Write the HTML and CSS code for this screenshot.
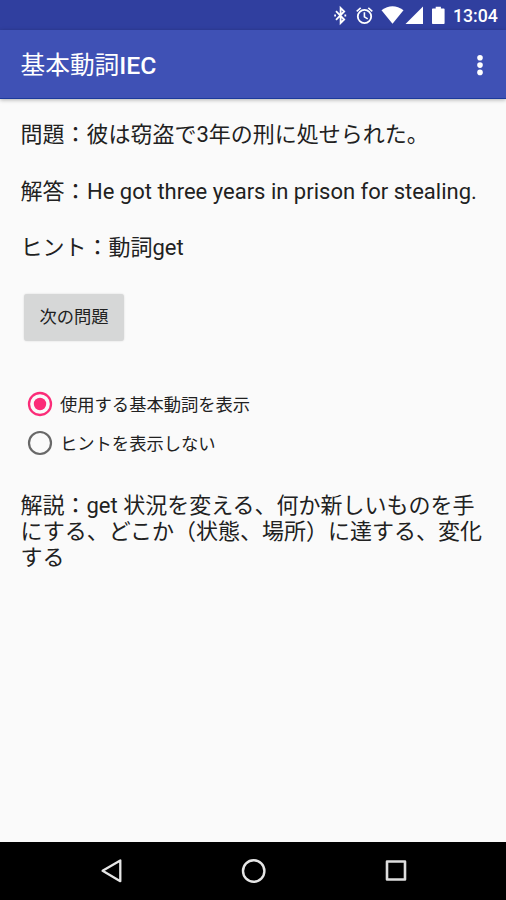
FILE: index.html
```
<!DOCTYPE html>
<html lang="ja">
<head>
<meta charset="utf-8">
<title>基本動詞IEC</title>
<link rel="stylesheet" href="styles.css">
</head>
<body>
<div class="screen">
  <div class="status">
    <svg width="114" height="30" viewBox="0 0 114 30" fill="#fff">
      <path d="M3 11.2L11.2 19.5L7.6 23V8L11.2 11.5L3 19.8" fill="none" stroke="#fff" stroke-width="1.8"/>
      <path d="M1.2 15.5h1.8M11.4 15.5h1.8" stroke="#fff" stroke-width="1.8"/>
      <circle cx="31.5" cy="16.5" r="6.7" fill="none" stroke="#fff" stroke-width="1.8"/>
      <path d="M23.7 11.3l4-3.4M39.3 11.3l-4-3.4M31.4 12.3v4.6l3.3 2" fill="none" stroke="#fff" stroke-width="1.6"/>
      <path d="M48.5 10.2Q59.5 2.4 70.5 10.2L59.5 23.8z"/>
      <path d="M90 6.6V24H72.5z"/>
      <path d="M99.8 8.4h2.9V6.8h5.2v1.6h2.9q.8 0 .8.8V23.2q0 .8-.8.8h-11q-.8 0-.8-.8V9.2q0-.8.8-.8z"/>
    </svg>
    <span class="clock">13:04</span>
  </div>
  <header class="appbar">
    <h1>基本動詞<b>IEC</b></h1>
    <svg width="8" height="24" viewBox="0 0 8 24" fill="#fff"><circle cx="4" cy="4.7" r="2.8"/><circle cx="4" cy="12.1" r="2.8"/><circle cx="4" cy="19.4" r="2.8"/></svg>
  </header>
  <main>
    <p class="row">問題：彼は窃盗で3年の刑に処せられた。</p>
    <p class="row">解答：<span class="answer">He got three years in prison for stealing.</span></p>
    <p class="row">ヒント：動詞get</p>
    <button class="next">次の問題</button>
    <div class="options">
      <div class="option"><svg width="26" height="26" viewBox="0 0 26 26"><circle cx="13" cy="13" r="11" fill="none" stroke="#fb2c78" stroke-width="2.3"/><circle cx="13" cy="13" r="6.2" fill="#fb2c78"/></svg><span>使用する基本動詞を表示</span></div>
      <div class="option"><svg width="26" height="26" viewBox="0 0 26 26"><circle cx="13" cy="13" r="11" fill="none" stroke="#686868" stroke-width="2.2"/></svg><span>ヒントを表示しない</span></div>
    </div>
    <p class="note">解説：get 状況を変える、何か新しいものを手<br>にする、どこか（状態、場所）に達する、変化<br>する</p>
  </main>
  <nav>
    <svg width="24" height="28" viewBox="0 0 24 28" fill="none" stroke="#e6e6e6" stroke-width="2.3" stroke-linejoin="round"><path d="M21.3 3.4V24.2L3.6 13.8z"/></svg>
    <svg width="28" height="28" viewBox="0 0 28 28" fill="none" stroke="#e6e6e6" stroke-width="2.4"><circle cx="13.7" cy="14" r="10.7"/></svg>
    <svg width="24" height="28" viewBox="0 0 24 28" fill="none" stroke="#dedede" stroke-width="2.6" stroke-linejoin="round"><path d="M3 4.5h18v18H3z"/></svg>
  </nav>
</div>
</body>
</html>
```
FILE: styles.css
```
body { margin: 0; }
.screen {
  width: 506px;
  height: 900px;
  display: flex;
  flex-direction: column;
  background: #fafafa;
  color: #212121;
  font-family: Roboto, "Noto Sans CJK JP", sans-serif;
}
.status {
  height: 30px;
  flex: none;
  display: flex;
  align-items: center;
  justify-content: flex-end;
  gap: 6px;
  padding-right: 8px;
  background: #303f9f;
  color: #fff;
}
.clock {
  font-size: 17.7px;
  font-weight: 500;
  line-height: 30px;
  padding-top: 2px;
  width: 45px;
  white-space: nowrap;
}
.appbar {
  height: 69px;
  flex: none;
  box-sizing: border-box;
  display: flex;
  align-items: center;
  justify-content: space-between;
  padding: 1px 22px 0 20.5px;
  background: #3f51b5;
  border-bottom: 1px solid #1c3a9b;
  box-shadow: 0 1px 4px rgba(0, 0, 0, .3);
  color: #fff;
}
h1 {
  margin: 0;
  padding-top: 3px;
  font-size: 24.7px;
  font-weight: 400;
  line-height: 36px;
}
h1 b { font-weight: 500; }
main {
  flex: 1;
  padding: 22px 20px 0 20.5px;
}
p { margin: 0; white-space: nowrap; }
.row {
  height: 56.5px;
  font-size: 22px;
  line-height: 28px;
}
.answer { margin-left: .5px; }
.next {
  display: block;
  width: 100px;
  height: 47px;
  margin: 3px 0 0 3.5px;
  padding: 0 0 3px;
  border: 0;
  border-radius: 3px;
  background: #d6d7d7;
  box-shadow: 0 0 2px rgba(0, 0, 0, .15);
  color: #212121;
  font-family: inherit;
  font-size: 17.3px;
}
.options { margin: 44px 0 0 6.5px; }
.option {
  height: 39.3px;
  display: flex;
  align-items: center;
  gap: 7px;
  font-size: 17.3px;
  line-height: 24px;
}
.option span { padding-top: 1px; }
.note {
  margin-top: 30px;
  font-size: 22px;
  line-height: 26px;
}
nav {
  height: 58.5px;
  flex: none;
  display: flex;
  align-items: center;
  justify-content: space-between;
  padding: 0 98px 0 99px;
  background: #000;
}
```
